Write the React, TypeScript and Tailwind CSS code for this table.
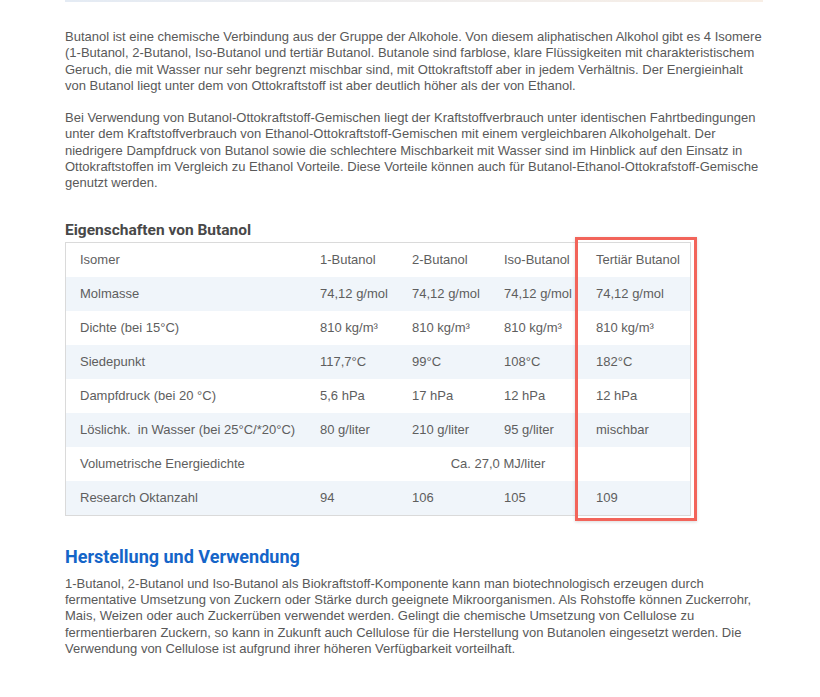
import React from "react";

type Row = { label: string; values: string[]; span?: boolean };

const rows: Row[] = [
  { label: "Isomer", values: ["1-Butanol", "2-Butanol", "Iso-Butanol", "Tertiär Butanol"] },
  { label: "Molmasse", values: ["74,12 g/mol", "74,12 g/mol", "74,12 g/mol", "74,12 g/mol"] },
  { label: "Dichte (bei 15°C)", values: ["810 kg/m³", "810 kg/m³", "810 kg/m³", "810 kg/m³"] },
  { label: "Siedepunkt", values: ["117,7°C", "99°C", "108°C", "182°C"] },
  { label: "Dampfdruck (bei 20 °C)", values: ["5,6 hPa", "17 hPa", "12 hPa", "12 hPa"] },
  { label: "Löslichk.  in Wasser (bei 25°C/*20°C)", values: ["80 g/liter", "210 g/liter", "95 g/liter", "mischbar"] },
  { label: "Volumetrische Energiedichte", values: ["Ca. 27,0 MJ/liter"], span: true },
  { label: "Research Oktanzahl", values: ["94", "106", "105", "109"] },
];

const PropertiesTable = () => {
  const cell = "px-[14px] h-[34px] flex items-center whitespace-pre";
  return (
    <div className="relative text-[#5e5e5e]">
      <div className="border border-[#dadada] grid grid-cols-[240px_92px_92px_92px_108px] w-[626px]">
        {rows.map((row, i) => {
          const stripe = i % 2 === 1 ? "bg-[#f0f5fa]" : "bg-white";
          return (
            <React.Fragment key={row.label}>
              <div className={`${cell} ${stripe}`}>{row.label}</div>
              {row.span ? (
                <div className={`${cell} ${stripe} col-span-4 justify-center`}>
                  {row.values[0]}
                </div>
              ) : (
                row.values.map((v, j) => (
                  <div key={j} className={`${cell} ${stripe}`}>
                    {v}
                  </div>
                ))
              )}
            </React.Fragment>
          );
        })}
      </div>
      {/* == highlight box round the last column == */}
      <div className="absolute left-[510px] top-[-5px] w-[122px] h-[284px] border-[3px] border-[#f2645a] shadow-[0_1px_3px_rgba(0,0,0,0.15)] pointer-events-none" />
    </div>
  );
};

export default function App() {
  const pStyle = "leading-[16.3px]";
  return (
    <div
      className="bg-white min-h-[697px] text-[13px] text-[#595959]"
      style={{ fontFamily: '"Liberation Sans", Arial, sans-serif' }}
    >
      <div className="ml-[65px] w-[698px]">
        <div className="h-[2px] bg-linear-to-r from-[#e4ebf4] to-[#f8eee5]" />

        <p className={`${pStyle} mt-[27px]`}>
          Butanol ist eine chemische Verbindung aus der Gruppe der Alkohole. Von diesem aliphatischen Alkohol gibt es 4 Isomere
          (1-Butanol, 2-Butanol, Iso-Butanol und tertiär Butanol. Butanole sind farblose, klare Flüssigkeiten mit charakteristischem
          Geruch, die mit Wasser nur sehr begrenzt mischbar sind, mit Ottokraftstoff aber in jedem Verhältnis. Der Energieinhalt
          von Butanol liegt unter dem von Ottokraftstoff ist aber deutlich höher als der von Ethanol.
        </p>

        <p className={`${pStyle} mt-[16px]`}>
          Bei Verwendung von Butanol-Ottokraftstoff-Gemischen liegt der Kraftstoffverbrauch unter identischen Fahrtbedingungen
          unter dem Kraftstoffverbrauch von Ethanol-Ottokraftstoff-Gemischen mit einem vergleichbaren Alkoholgehalt. Der
          niedrigere Dampfdruck von Butanol sowie die schlechtere Mischbarkeit mit Wasser sind im Hinblick auf den Einsatz in
          Ottokraftstoffen im Vergleich zu Ethanol Vorteile. Diese Vorteile können auch für Butanol-Ethanol-Ottokrafstoff-Gemische
          genutzt werden.
        </p>

        <h3
          className="mt-[29px] mb-[3px] text-[15.5px] leading-[18px] font-bold text-[#484848]"
          style={{ fontFamily: "Roboto, sans-serif" }}
        >
          Eigenschaften von Butanol
        </h3>

        <PropertiesTable />

        <h2
          className="mt-[30px] text-[18px] leading-[22px] font-bold text-[#1565c8]"
          style={{ fontFamily: "Roboto, sans-serif" }}
        >
          Herstellung und Verwendung
        </h2>

        <p className={`${pStyle} mt-[8px]`}>
          1-Butanol, 2-Butanol und Iso-Butanol als Biokraftstoff-Komponente kann man biotechnologisch erzeugen durch
          fermentative Umsetzung von Zuckern oder Stärke durch geeignete Mikroorganismen. Als Rohstoffe können Zuckerrohr,
          Mais, Weizen oder auch Zuckerrüben verwendet werden. Gelingt die chemische Umsetzung von Cellulose zu
          fermentierbaren Zuckern, so kann in Zukunft auch Cellulose für die Herstellung von Butanolen eingesetzt werden. Die
          Verwendung von Cellulose ist aufgrund ihrer höheren Verfügbarkeit vorteilhaft.
        </p>
      </div>
    </div>
  );
}
